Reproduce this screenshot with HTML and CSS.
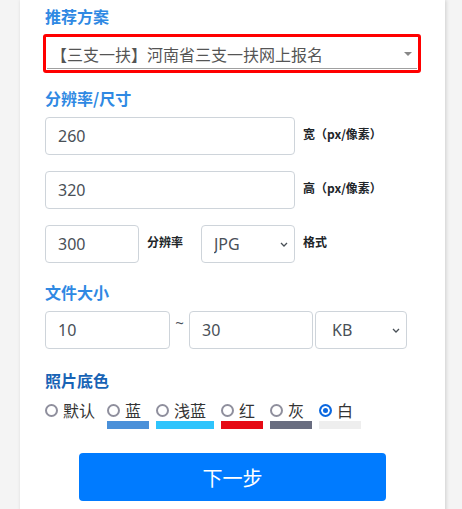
FILE: index.html
```html
<!DOCTYPE html>
<html lang="zh-CN">
<head>
<meta charset="utf-8">
<title>证件照设置</title>
<link rel="stylesheet" href="styles.css">
</head>
<body>
<div class="card">
  <h3 class="title">推荐方案</h3>
  <div class="preset-box">
    <div class="preset-wrap">
      <select class="preset">
        <option>【三支一扶】河南省三支一扶网上报名</option>
      </select>
      <span class="tri"></span>
    </div>
  </div>

  <h3 class="title">分辨率/尺寸</h3>
  <div class="row">
    <input class="fc w-wide" type="text" value="260">
    <label class="side">宽（px/像素）</label>
  </div>
  <div class="row">
    <input class="fc w-wide" type="text" value="320">
    <label class="side">高（px/像素）</label>
  </div>
  <div class="row row-last">
    <input class="fc w-small" type="text" value="300">
    <label class="side side-dpi">分辨率</label>
    <div class="sel w-small">
      <select class="fc sel-jpg"><option>JPG</option></select>
      <svg class="chev" width="8" height="5" viewBox="0 0 8 5"><path d="M1 1l3 3 3-3" fill="none" stroke="#495057" stroke-width="1.3"/></svg>
    </div>
    <label class="side">格式</label>
  </div>

  <h3 class="title">文件大小</h3>
  <div class="row row-size">
    <input class="fc w-min" type="text" value="10">
    <span class="tilde">~</span>
    <input class="fc w-max" type="text" value="30">
    <div class="sel w-unit">
      <select class="fc sel-kb"><option>KB</option></select>
      <svg class="chev" width="8" height="5" viewBox="0 0 8 5"><path d="M1 1l3 3 3-3" fill="none" stroke="#495057" stroke-width="1.3"/></svg>
    </div>
  </div>

  <h3 class="title title-dark">照片底色</h3>
  <div class="colors">
    <div class="opt opt-default">
      <label><input type="radio" name="bg">默认</label>
    </div>
    <div class="opt">
      <label><input type="radio" name="bg">蓝</label>
      <span class="sw sw-blue"></span>
    </div>
    <div class="opt">
      <label><input type="radio" name="bg">浅蓝</label>
      <span class="sw sw-light"></span>
    </div>
    <div class="opt">
      <label><input type="radio" name="bg">红</label>
      <span class="sw sw-red"></span>
    </div>
    <div class="opt">
      <label><input type="radio" name="bg">灰</label>
      <span class="sw sw-gray"></span>
    </div>
    <div class="opt">
      <label><input type="radio" name="bg" checked>白</label>
      <span class="sw sw-white"></span>
    </div>
  </div>

  <button class="next" type="button">下一步</button>
</div>
</body>
</html>
```

FILE: styles.css
```css
* { box-sizing: border-box; }

body {
  margin: 0;
  background: #f4f4f4;
  font-family: "Noto Sans", "Noto Sans CJK SC", sans-serif;
}

.card {
  margin-left: 20px;
  width: 425px;
  min-height: 509px;
  background: #fff;
  box-shadow: 1px 0 4px rgba(0, 0, 0, 0.16);
  padding: 4px 25px 20px;
}

.title {
  margin: 0 0 7px;
  font-size: 16px;
  line-height: 24px;
  font-weight: 700;
  color: #2f89e3;
  font-family: "Noto Sans CJK SC", sans-serif;
}

.title:first-child { margin-bottom: 6px; }

.title-dark { color: #1863b5; margin-bottom: 8px; }

.preset-box {
  margin: 0 -1px 13px -2px;
  border: 3px solid #ff0000;
  border-radius: 3px;
  padding: 0 1px 1px;
}

.preset-wrap { position: relative; }

.preset {
  appearance: none;
  -webkit-appearance: none;
  display: block;
  width: 100%;
  height: 32px;
  border: 0;
  border-bottom: 1px solid #a0a0a0;
  border-radius: 0;
  padding: 2px 20px 0 4px;
  font-family: "Noto Sans CJK SC", sans-serif;
  font-size: 16px;
  color: #555;
  background: #fff;
  outline: none;
}

.tri {
  position: absolute;
  right: 5px;
  top: 15px;
  border-left: 4px solid transparent;
  border-right: 4px solid transparent;
  border-top: 4px solid #888;
}

.row {
  display: flex;
  align-items: flex-start;
  margin-bottom: 16px;
}

.row-last { margin-bottom: 17px; }
.row-size { margin-bottom: 19px; }

.fc {
  display: block;
  height: 38px;
  border: 1px solid #ced4da;
  border-radius: 4px;
  padding: 6px 12px;
  font-family: "Noto Sans", sans-serif;
  font-size: 16px;
  color: #495057;
  background: #fff;
  outline: none;
}

select.fc {
  appearance: none;
  -webkit-appearance: none;
  width: 100%;
}

.sel-kb { padding-left: 16px; }

.w-wide { width: 250px; }
.w-small { width: 94px; }
.w-min { width: 125px; }
.w-max { width: 124px; }
.w-unit { width: 92px; margin-left: 2px; }

.sel { position: relative; flex: none; }

.chev {
  position: absolute;
  right: 7px;
  top: 17px;
}

.side {
  margin-left: 8px;
  padding-top: 8px;
  font-family: "Noto Sans CJK SC", sans-serif;
  font-size: 12px;
  line-height: 18px;
  font-weight: 700;
  color: #212529;
  white-space: nowrap;
}

.side-dpi { width: 46px; margin-right: 8px; }

.tilde {
  width: 19px;
  text-align: center;
  font-size: 15px;
  line-height: 18px;
  color: #495057;
  padding-top: 2px;
}

.colors {
  display: flex;
  gap: 7px;
}

.opt {
  display: flex;
  flex-direction: column;
}

.opt label {
  display: flex;
  align-items: center;
  gap: 5px;
  height: 20px;
  padding-right: 8px;
  font-family: "Noto Sans CJK SC", sans-serif;
  font-size: 16px;
  color: #333;
}

.opt-default label { padding-right: 5px; }

.opt input[type="radio"] {
  appearance: none;
  -webkit-appearance: none;
  margin: 0;
  width: 13px;
  height: 13px;
  flex: none;
  border: 2px solid #8f8f9d;
  border-radius: 50%;
  background: #fff;
}

.opt input[type="radio"]:checked {
  border-color: #0b68e0;
  background: #0b68e0;
  box-shadow: inset 0 0 0 2px #fff;
}

.sw {
  display: block;
  height: 8px;
  margin-top: 1px;
}

.sw-blue { background: #4a90d9; }
.sw-light { background: #2ec4fc; }
.sw-red { background: #e60a14; }
.sw-gray { background: #696d80; }
.sw-white { background: #eeeeee; }

.next {
  display: block;
  width: 307px;
  height: 48px;
  margin: 24px auto 0;
  border: 0;
  border-radius: 4px;
  background: #007bff;
  color: #fff;
  font-family: "Noto Sans CJK SC", sans-serif;
  font-size: 20px;
}
```
